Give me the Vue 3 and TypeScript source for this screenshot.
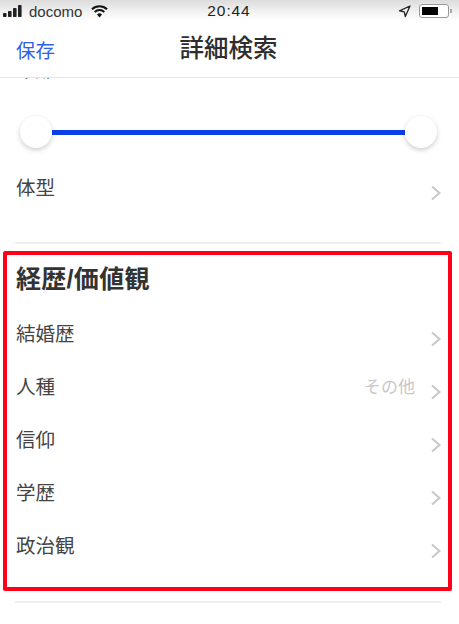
<script setup lang="ts">
const rows: { label: string; value?: string }[] = [
  { label: '結婚歴' },
  { label: '人種', value: 'その他' },
  { label: '信仰' },
  { label: '学歴' },
  { label: '政治観' },
]
</script>

<template>
  <div class="page">
    <header class="status">
      <div class="status-left">
        <svg class="signal" width="21" height="12" viewBox="0 0 21 12"><rect x="0" y="8" width="3.6" height="4" rx="0.8"/><rect x="5" y="6" width="3.6" height="6" rx="0.8"/><rect x="10" y="3" width="3.6" height="9" rx="0.8"/><rect x="15" y="0" width="3.6" height="12" rx="0.8"/></svg>
        <span class="carrier">docomo</span>
        <svg class="wifi" width="17" height="13" viewBox="0 0 17 13"><path d="M1 4.2a10.8 10.8 0 0 1 15 0" fill="none" stroke="#111" stroke-width="2"/><path d="M3.7 7a7 7 0 0 1 9.6 0" fill="none" stroke="#111" stroke-width="2"/><path d="M6 9.4a3.6 3.6 0 0 1 5 0L8.500 12.500z" fill="#111"/></svg>
      </div>
      <span class="time">20:44</span>
      <div class="status-right">
        <svg width="13" height="13" viewBox="0 0 13 13"><path d="M12 1 1.500 5.800l4.800 1 1 4.800z" fill="none" stroke="#222" stroke-width="1.300" stroke-linejoin="round"/></svg>
        <div class="battery"><div class="battery-fill"></div></div>
        <div class="battery-cap"></div>
      </div>
    </header>

    <nav class="nav">
      <span class="save">保存</span>
      <h1 class="title">詳細検索</h1>
    </nav>

    <main class="content">
      <div class="clipped">
        <span>年齢</span>
      </div>
      <div class="slider">
        <div class="thumb"></div>
        <div class="track"></div>
        <div class="thumb"></div>
      </div>
      <div class="row body-row">
        <span class="label">体型</span>
        <svg class="chev" width="12" height="16" viewBox="0 0 12 16"><path d="M2 1.500 9.500 8 2 14.500" fill="none" stroke="#c7c7cc" stroke-width="2"/></svg>
      </div>
      <div class="divider"></div>

      <section class="highlight">
        <h2 class="heading">経歴/価値観</h2>
        <div v-for="row in rows" :key="row.label" class="row">
          <span class="label">{{ row.label }}</span>
          <span v-if="row.value" class="value">{{ row.value }}</span>
          <svg class="chev" width="12" height="16" viewBox="0 0 12 16"><path d="M2 1.500 9.500 8 2 14.500" fill="none" stroke="#c7c7cc" stroke-width="2"/></svg>
        </div>
      </section>
      <div class="divider bottom"></div>
    </main>
  </div>
</template>

<style scoped>
.page {
  width: 459px;
  height: 624px;
  display: flex;
  flex-direction: column;
  overflow: hidden;
  background: #fff;
  color: #333;
  font-family: "Liberation Sans", "Noto Sans CJK JP", sans-serif;
}
.status {
  flex: none;
  height: 22px;
  display: grid;
  grid-template-columns: 1fr auto 1fr;
  align-items: center;
  padding: 0 4px 0 3px;
  box-sizing: border-box;
  background: linear-gradient(#dcdcdc, #f4f4f4 60%, #fff);
  color: #222;
}
.status-left {
  display: flex;
  align-items: center;
  gap: 5px;
}
.signal { fill: #222; }
.carrier {
  font-size: 15px;
  color: #333;
  margin-right: 4px;
}
.time {
  font-size: 15.500px;
  letter-spacing: 0.9px;
  color: #222;
}
.status-right {
  display: flex;
  align-items: center;
  justify-content: flex-end;
  gap: 0;
}
.battery {
  width: 30px;
  height: 14px;
  margin-left: 8px;
  border: 1px solid #999;
  border-radius: 3px;
  padding: 2px;
  box-sizing: border-box;
  display: flex;
  background: #fff;
}
.battery-fill {
  width: 16px;
  background: #000;
}
.battery-cap {
  width: 2px;
  height: 4px;
  background: #aaa;
  margin-left: 1px;
  margin-right: 3px;
}
.nav {
  flex: none;
  height: 55px;
  display: flex;
  align-items: center;
  justify-content: center;
  position: relative;
  z-index: 1;
  background: #fff;
  border-bottom: 1px solid #e6e6e6;
}
.save {
  position: absolute;
  left: 16px;
  top: 16px;
  font-size: 19.500px;
  line-height: 26px;
  color: #2f62ea;
}
.title {
  margin: 0 2px 0 0;
  font-size: 24.500px;
  line-height: 30px;
  font-weight: 500;
  color: #2e2e2e;
  position: relative;
  top: -1px;
}
.content {
  flex: 1;
  min-height: 0;
  overflow: hidden;
}
.clipped {
  height: 0;
  padding-left: 16px;
  font-size: 19px;
  line-height: 26px;
  color: #333;
  margin-top: -20px;
}
.slider {
  margin-top: 57px;
  padding: 0 22px 0 20px;
  height: 34px;
  display: flex;
  align-items: center;
}
.track {
  flex: 1;
  height: 5px;
  background: #0a3fe8;
}
.thumb {
  flex: none;
  width: 32px;
  height: 32px;
  border-radius: 50%;
  background: #fff;
  box-shadow: 0 2px 5px rgba(0, 0, 0, 0.2);
}
.row {
  height: 53px;
  display: flex;
  align-items: center;
  padding-left: 9px;
  padding-right: 6px;
}
.body-row {
  padding-left: 16px;
  padding-right: 17px;
  margin-top: 14px;
}
.label {
  font-size: 19.500px;
  line-height: 26px;
  color: #444;
  margin-right: auto;
  position: relative;
  top: -2px;
}
.value {
  font-size: 17px;
  color: #c8c8c8;
  margin-right: 15px;
  position: relative;
  top: -3px;
}
.chev {
  flex: none;
  position: relative;
  top: 3px;
}
.divider {
  height: 2px;
  margin: 26px 18px 0 15px;
  background: #eeeeee;
}
.highlight {
  margin: 7px 7px 0 3px;
  height: 340px;
  box-sizing: border-box;
  border: 4px solid #ff0018;
  border-radius: 2px;
  padding-top: 9px;
}
.heading {
  margin: 0 0 15px 9px;
  font-size: 25px;
  line-height: 30px;
  font-weight: 700;
  letter-spacing: 0.3px;
  color: #333;
}
.bottom {
  margin-top: 10px;
}
</style>
